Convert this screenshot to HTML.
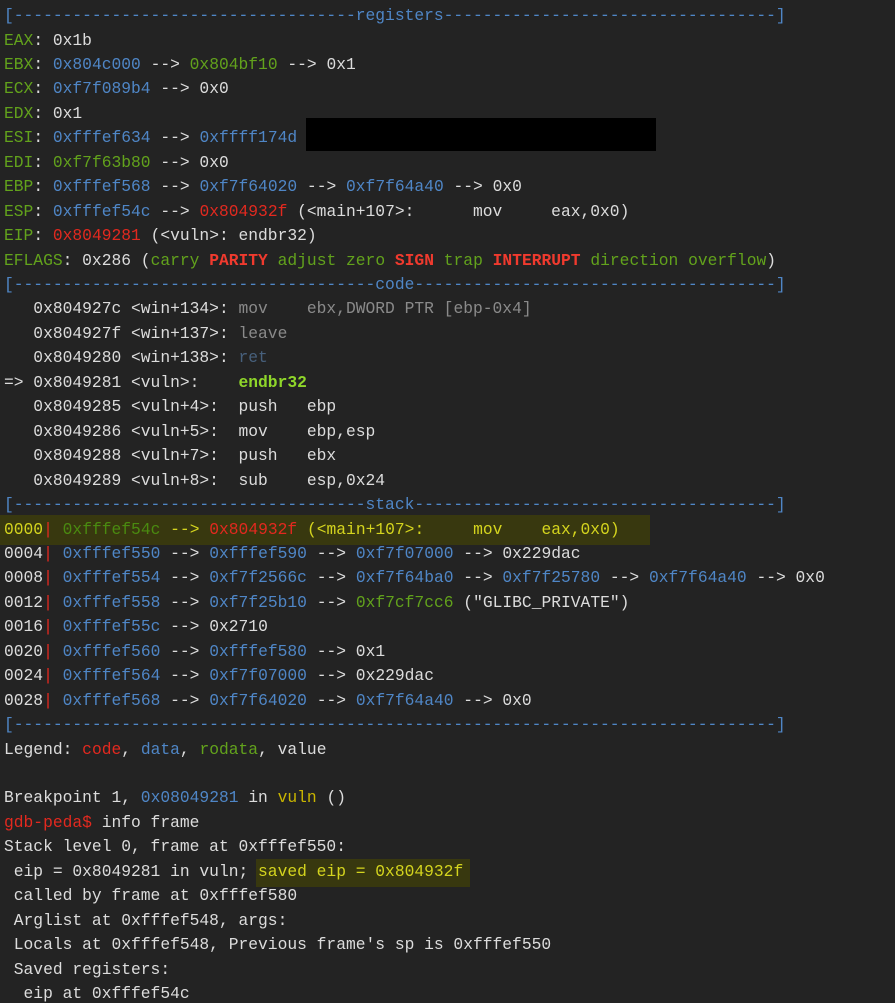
<!DOCTYPE html>
<html><head><meta charset="utf-8"><style>
html,body{margin:0;padding:0;background:#232323;width:895px;height:1003px;overflow:hidden}
body{font-family:"Liberation Mono",monospace;font-size:16.3px;color:#dcdcdc;position:relative}
.l{position:absolute;left:4px;height:24px;line-height:24px;white-space:pre}
.b{color:#4f86c6}.g{color:#62a21c}.r{color:#e2291f}.y{color:#d4d41e}.vy{color:#c9b500}
.dg{color:#4a8a10}.gr{color:#8a8a8a}.dim{color:#47607c}
.R{color:#f03a2e;font-weight:bold}
.hl{position:absolute;background:#38380f}
</style></head><body>
<div class="hl" style="left:0;top:515px;width:650px;height:30px"></div>
<div class="hl" style="left:256px;top:859px;width:214px;height:28px"></div>
<div style="position:absolute;left:306px;top:118px;width:350px;height:33px;background:#000"></div>

<div class="l b" style="top:4px">[-----------------------------------registers----------------------------------]</div>
<div class="l" style="top:28.5px"><span class="g">EAX</span>: 0x1b</div>
<div class="l" style="top:52.9px"><span class="g">EBX</span>: <span class="b">0x804c000</span> --&gt; <span class="g">0x804bf10</span> --&gt; 0x1</div>
<div class="l" style="top:77.4px"><span class="g">ECX</span>: <span class="b">0xf7f089b4</span> --&gt; 0x0</div>
<div class="l" style="top:101.8px"><span class="g">EDX</span>: 0x1</div>
<div class="l" style="top:126.3px"><span class="g">ESI</span>: <span class="b">0xfffef634</span> --&gt; <span class="b">0xffff174d</span></div>
<div class="l" style="top:150.7px"><span class="g">EDI</span>: <span class="g">0xf7f63b80</span> --&gt; 0x0</div>
<div class="l" style="top:175.2px"><span class="g">EBP</span>: <span class="b">0xfffef568</span> --&gt; <span class="b">0xf7f64020</span> --&gt; <span class="b">0xf7f64a40</span> --&gt; 0x0</div>
<div class="l" style="top:199.6px"><span class="g">ESP</span>: <span class="b">0xfffef54c</span> --&gt; <span class="r">0x804932f</span> (&lt;main+107&gt;:      mov     eax,0x0)</div>
<div class="l" style="top:224.1px"><span class="g">EIP</span>: <span class="r">0x8049281</span> (&lt;vuln&gt;: endbr32)</div>
<div class="l" style="top:248.5px"><span class="g">EFLAGS</span>: 0x286 (<span class="g">carry</span> <span class="R">PARITY</span> <span class="g">adjust</span> <span class="g">zero</span> <span class="R">SIGN</span> <span class="g">trap</span> <span class="R">INTERRUPT</span> <span class="g">direction</span> <span class="g">overflow</span>)</div>
<div class="l b" style="top:273px">[-------------------------------------code-------------------------------------]</div>

<div class="l" style="top:297.4px">   0x804927c &lt;win+134&gt;: <span class="gr">mov    ebx,DWORD PTR [ebp-0x4]</span></div>
<div class="l" style="top:321.9px">   0x804927f &lt;win+137&gt;: <span class="gr">leave</span></div>
<div class="l" style="top:346.3px">   0x8049280 &lt;win+138&gt;: <span class="dim">ret</span></div>
<div class="l" style="top:370.8px">=&gt; 0x8049281 &lt;vuln&gt;:    <span style="color:#8fd62a;font-weight:bold">endbr32</span></div>
<div class="l" style="top:395.2px">   0x8049285 &lt;vuln+4&gt;:  push   ebp</div>
<div class="l" style="top:419.7px">   0x8049286 &lt;vuln+5&gt;:  mov    ebp,esp</div>
<div class="l" style="top:444.1px">   0x8049288 &lt;vuln+7&gt;:  push   ebx</div>
<div class="l" style="top:468.6px">   0x8049289 &lt;vuln+8&gt;:  sub    esp,0x24</div>

<div class="l b" style="top:493px">[------------------------------------stack-------------------------------------]</div>
<div class="l" style="top:517.5px"><span class="y">0000</span><span class="r">|</span> <span class="dg">0xfffef54c</span> <span class="y">--&gt;</span> <span class="r">0x804932f</span> <span class="y">(&lt;main+107&gt;:     mov    eax,0x0)</span></div>
<div class="l" style="top:541.9px">0004<span class="r">|</span> <span class="b">0xfffef550</span> --&gt; <span class="b">0xfffef590</span> --&gt; <span class="b">0xf7f07000</span> --&gt; 0x229dac</div>
<div class="l" style="top:566.4px">0008<span class="r">|</span> <span class="b">0xfffef554</span> --&gt; <span class="b">0xf7f2566c</span> --&gt; <span class="b">0xf7f64ba0</span> --&gt; <span class="b">0xf7f25780</span> --&gt; <span class="b">0xf7f64a40</span> --&gt; 0x0</div>
<div class="l" style="top:590.8px">0012<span class="r">|</span> <span class="b">0xfffef558</span> --&gt; <span class="b">0xf7f25b10</span> --&gt; <span class="g">0xf7cf7cc6</span> ("GLIBC_PRIVATE")</div>
<div class="l" style="top:615.3px">0016<span class="r">|</span> <span class="b">0xfffef55c</span> --&gt; 0x2710</div>
<div class="l" style="top:639.7px">0020<span class="r">|</span> <span class="b">0xfffef560</span> --&gt; <span class="b">0xfffef580</span> --&gt; 0x1</div>
<div class="l" style="top:664.2px">0024<span class="r">|</span> <span class="b">0xfffef564</span> --&gt; <span class="b">0xf7f07000</span> --&gt; 0x229dac</div>
<div class="l" style="top:688.6px">0028<span class="r">|</span> <span class="b">0xfffef568</span> --&gt; <span class="b">0xf7f64020</span> --&gt; <span class="b">0xf7f64a40</span> --&gt; 0x0</div>
<div class="l b" style="top:713.1px">[------------------------------------------------------------------------------]</div>
<div class="l" style="top:737.5px">Legend: <span class="r">code</span>, <span class="b">data</span>, <span class="g">rodata</span>, value</div>
<div class="l" style="top:786.4px">Breakpoint 1, <span class="b">0x08049281</span> in <span class="vy">vuln</span> ()</div>
<div class="l" style="top:810.9px"><span class="r">gdb-peda$</span> info frame</div>
<div class="l" style="top:835.3px">Stack level 0, frame at 0xfffef550:</div>
<div class="l" style="top:859.8px"> eip = 0x8049281 in vuln; <span class="y">saved eip = 0x804932f</span></div>
<div class="l" style="top:884.2px"> called by frame at 0xfffef580</div>
<div class="l" style="top:908.7px"> Arglist at 0xfffef548, args:</div>
<div class="l" style="top:933.1px"> Locals at 0xfffef548, Previous frame's sp is 0xfffef550</div>
<div class="l" style="top:957.6px"> Saved registers:</div>
<div class="l" style="top:982px">  eip at 0xfffef54c</div>
</body></html>
